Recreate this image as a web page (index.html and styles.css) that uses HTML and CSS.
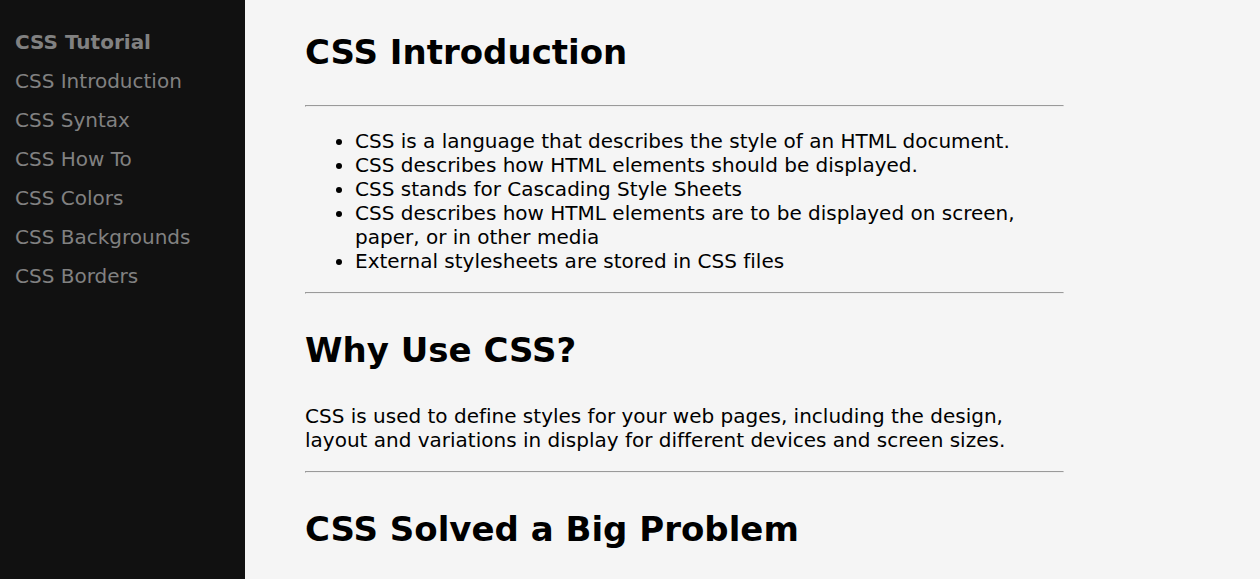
FILE: index.html
```html
<!DOCTYPE html>
<html lang="en">
<head>
<meta charset="utf-8">
<title>CSS Tutorial</title>
<link rel="stylesheet" href="styles.css">
</head>
<body>
<div class="layout">
  <nav class="sidebar" aria-label="Tutorial">
    <a class="sidebar-link sidebar-title" href="#top">CSS Tutorial</a>
    <a class="sidebar-link" href="#introduction">CSS Introduction</a>
    <a class="sidebar-link" href="#syntax">CSS Syntax</a>
    <a class="sidebar-link" href="#how-to">CSS How To</a>
    <a class="sidebar-link" href="#colors">CSS Colors</a>
    <a class="sidebar-link" href="#backgrounds">CSS Backgrounds</a>
    <a class="sidebar-link" href="#borders">CSS Borders</a>
  </nav>
  <main class="content">
    <section class="section" id="introduction">
      <h1 class="heading">CSS Introduction</h1>
      <hr class="rule">
      <ul class="list">
        <li>CSS is a language that describes the style of an HTML document.</li>
        <li>CSS describes how HTML elements should be displayed.</li>
        <li>CSS stands for Cascading Style Sheets</li>
        <li>CSS describes how HTML elements are to be displayed on screen, paper, or in other media</li>
        <li>External stylesheets are stored in CSS files</li>
      </ul>
      <hr class="rule">
    </section>
    <section class="section">
      <h1 class="heading">Why Use CSS?</h1>
      <p class="text">CSS is used to define styles for your web pages, including the design, layout and variations in display for different devices and screen sizes.</p>
      <hr class="rule">
    </section>
    <section class="section">
      <h1 class="heading">CSS Solved a Big Problem</h1>
    </section>
  </main>
</div>
</body>
</html>
```
FILE: styles.css
```css
body {
  margin: 0;
  background: #f5f5f5;
  color: #000;
  font-family: Verdana, "DejaVu Sans", sans-serif;
  font-size: 20px;
  font-variant-ligatures: none;
  line-height: 24px;
}

.layout {
  display: flex;
  min-height: 100vh;
}

.sidebar {
  flex: 0 0 245px;
  box-sizing: border-box;
  padding: 23px 15px;
  background: #111;
}

.sidebar-link {
  display: block;
  line-height: 39px;
  color: #818181;
  text-decoration: none;
}

.sidebar-title {
  font-weight: bold;
}

.content {
  flex: 1;
  max-width: 759px;
  padding: 30px 60px 0;
}

.heading {
  margin: 0 0 30px;
  font-size: 34px;
  line-height: 45px;
}

.rule {
  margin: 0;
  border: 1px solid;
  border-color: #9a9a9a #eee #eee #9a9a9a;
}

.list {
  margin: 22px 0 19px;
  padding-left: 50px;
}

.text {
  margin: 31px 0 19px;
}

.section + .section {
  margin-top: 34px;
}
```
